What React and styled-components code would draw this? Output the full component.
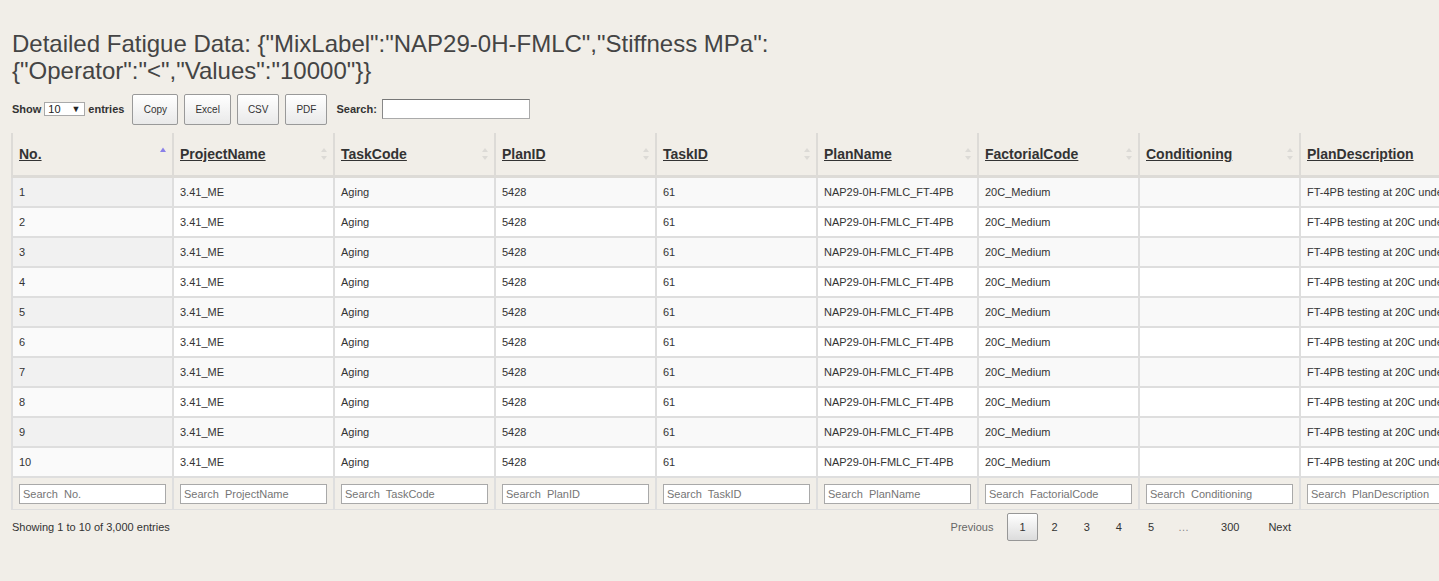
import React from "react";
import styled, { createGlobalStyle } from "styled-components";

const GlobalStyle = createGlobalStyle`
  html, body {
    margin: 0;
    padding: 0;
    overflow: hidden;
    background-color: #f1eee8;
    font-family: "Liberation Sans", Arial, sans-serif;
    color: #333;
  }
`;

const Page = styled.div`
  padding: 0 12px;
`;

const Title = styled.h2`
  max-width: 800px;
  margin: 30px 0 10px 0;
  font-size: 24px;
  font-weight: normal;
  line-height: 27px;
  color: #444;
`;

const Wrapper = styled.div`
  width: 1291px;
`;

const Toolbar = styled.div`
  display: flex;
  align-items: center;
  height: 30px;
  margin-bottom: 9px;
  font-size: 11px;
`;

const Label = styled.label`
  display: flex;
  align-items: center;
  gap: 3px;
  font-weight: bold;
  color: #333;
`;

const FakeSelect = styled.span`
  display: inline-flex;
  align-items: center;
  justify-content: space-between;
  box-sizing: border-box;
  width: 41px;
  height: 14px;
  padding: 0 4px 0 3px;
  border: 1px solid #a9a9a9;
  background: #fff;
  font-weight: normal;
  font-size: 11px;
  color: #222;
  span {
    font-size: 9px;
  }
`;

const ButtonGroup = styled.div`
  display: flex;
  gap: 6px;
  margin-left: 8px;
`;

const ToolButton = styled.button`
  box-sizing: border-box;
  height: 31px;
  min-width: ${(p) => p.w}px;
  padding: 0 10px;
  border: 1px solid #999;
  border-radius: 2px;
  background-image: linear-gradient(to bottom, #ffffff 0%, #e9e9e9 100%);
  font-family: "Liberation Sans", Arial, sans-serif;
  font-size: 10px;
  color: #333;
  cursor: pointer;
`;

const SearchLabel = styled(Label)`
  margin-left: 9px;
  gap: 5px;
`;

const SearchInput = styled.input`
  box-sizing: border-box;
  width: 148px;
  height: 20px;
  border: 1px solid #aaa;
  border-top-color: #777;
  border-left-color: #888;
  background: #fff;
`;

const Table = styled.table`
  table-layout: fixed;
  border-collapse: collapse;
  margin-left: -1px;
  width: ${(p) => p.width}px;
  font-size: 11px;
`;

const HeadCell = styled.th`
  position: relative;
  height: 42px;
  padding: 0 6px;
  text-align: left;
  background: #f1eee8;
  border: 2px solid #dddbd7;
  border-top: none;
  border-bottom-width: 3px;
  font-size: 14px;
  font-weight: bold;
  color: #333;
  span {
    text-decoration: underline;
  }
`;

const SortIcon = styled.svg`
  position: absolute;
  right: 5px;
  top: 50%;
  margin-top: -7px;
`;

const Row = styled.tr`
  background: ${(p) => (p.odd ? "#f9f9f9" : "#ffffff")};
`;

const Cell = styled.td`
  height: 28px;
  padding: 0 6px;
  border: 2px solid #dedede;
  white-space: nowrap;
  overflow: hidden;
  color: #333;
  background: ${(p) => (p.sorted ? (p.odd ? "#f1f1f1" : "#fafafa") : "inherit")};
`;

const FootCell = styled.th`
  height: 31px;
  padding: 0 6px;
  background: #f1eee8;
  border: 2px solid #dedede;
  border-bottom-width: 1px;
  text-align: left;
`;

const FootInput = styled.input`
  box-sizing: border-box;
  width: 147px;
  height: 20px;
  padding: 0 3px;
  border: 1px solid #a9a9a9;
  background: #fff;
  font-family: "Liberation Sans", Arial, sans-serif;
  font-size: 11px;
  &::placeholder {
    color: #757575;
  }
`;

const Footer = styled.div`
  display: flex;
  align-items: center;
  justify-content: space-between;
  margin-top: 3px;
  font-size: 11px;
`;

const Info = styled.div`
  color: #333;
`;

const Pager = styled.div`
  display: flex;
  align-items: center;
`;

const PageButton = styled.span`
  box-sizing: border-box;
  min-width: 16px;
  padding: 7px 11px;
  line-height: 12px;
  margin-left: ${(p) => p.gap || 2}px;
  border: 1px solid ${(p) => (p.current ? "#979797" : "transparent")};
  border-radius: 2px;
  background: ${(p) =>
    p.current ? "linear-gradient(to bottom, #ffffff 0%, #dcdcdc 100%)" : "transparent"};
  color: ${(p) => (p.muted ? "#666" : "#333")};
  text-align: center;
  cursor: pointer;
`;

const Ellipsis = styled.span`
  padding: 0 18px 0 12px;
  color: #888;
`;

const columns = [
  "No.",
  "ProjectName",
  "TaskCode",
  "PlanID",
  "TaskID",
  "PlanName",
  "FactorialCode",
  "Conditioning",
  "PlanDescription",
];

const widths = [161, 161, 161, 161, 161, 161, 161, 161, 380];

const rows = Array.from({ length: 10 }, (_, i) => [
  String(i + 1),
  "3.41_ME",
  "Aging",
  "5428",
  "61",
  "NAP29-0H-FMLC_FT-4PB",
  "20C_Medium",
  "",
  "FT-4PB testing at 20C under Medium strain level",
]);

const SortBoth = () => (
  <SortIcon width="8" height="14" viewBox="0 0 8 14">
    <path d="M4 1 L7 5 L1 5 Z" fill="#dcdad6" />
    <path d="M1 9 L7 9 L4 13 Z" fill="#dcdad6" />
  </SortIcon>
);

const SortAsc = () => (
  <SortIcon width="8" height="14" viewBox="0 0 8 14">
    <path d="M4 0.5 L7 5 L1 5 Z" fill="#8a80e8" />
  </SortIcon>
);

const App = () => {
  const total = widths.reduce((a, b) => a + b, 0);
  return (
    <Page>
      <GlobalStyle />
      <Title>
        Detailed Fatigue Data: {'{"MixLabel":"NAP29-0H-FMLC","Stiffness MPa":'}
        {' {"Operator":"<","Values":"10000"}}'}
      </Title>
      <Wrapper>
        <Toolbar>
          <Label>
            Show
            <FakeSelect>
              10 <span>▼</span>
            </FakeSelect>
            entries
          </Label>
          <ButtonGroup>
            <ToolButton w={46}>Copy</ToolButton>
            <ToolButton w={45}>Excel</ToolButton>
            <ToolButton w={41}>CSV</ToolButton>
            <ToolButton w={41}>PDF</ToolButton>
          </ButtonGroup>
          <SearchLabel>
            Search:
            <SearchInput type="text" />
          </SearchLabel>
        </Toolbar>
        <Table width={total}>
          <colgroup>
            {widths.map((w, i) => (
              <col key={i} style={{ width: w }} />
            ))}
          </colgroup>
          <thead>
            <tr>
              {columns.map((c, i) => (
                <HeadCell key={c}>
                  <span>{c}</span>
                  {i === 0 ? <SortAsc /> : i < 8 ? <SortBoth /> : null}
                </HeadCell>
              ))}
            </tr>
          </thead>
          <tbody>
            {rows.map((r, ri) => (
              <Row key={ri} odd={ri % 2 === 0}>
                {r.map((v, ci) => (
                  <Cell key={ci} sorted={ci === 0} odd={ri % 2 === 0}>
                    {v}
                  </Cell>
                ))}
              </Row>
            ))}
          </tbody>
          <tfoot>
            <tr>
              {columns.map((c) => (
                <FootCell key={c}>
                  <FootInput type="text" placeholder={`Search  ${c}`} />
                </FootCell>
              ))}
            </tr>
          </tfoot>
        </Table>
        <Footer>
          <Info>Showing 1 to 10 of 3,000 entries</Info>
          <Pager>
            <PageButton muted>Previous</PageButton>
            <PageButton current>1</PageButton>
            <PageButton>2</PageButton>
            <PageButton>3</PageButton>
            <PageButton>4</PageButton>
            <PageButton>5</PageButton>
            <Ellipsis>…</Ellipsis>
            <PageButton>300</PageButton>
            <PageButton gap={5}>Next</PageButton>
          </Pager>
        </Footer>
      </Wrapper>
    </Page>
  );
};

export default App;
